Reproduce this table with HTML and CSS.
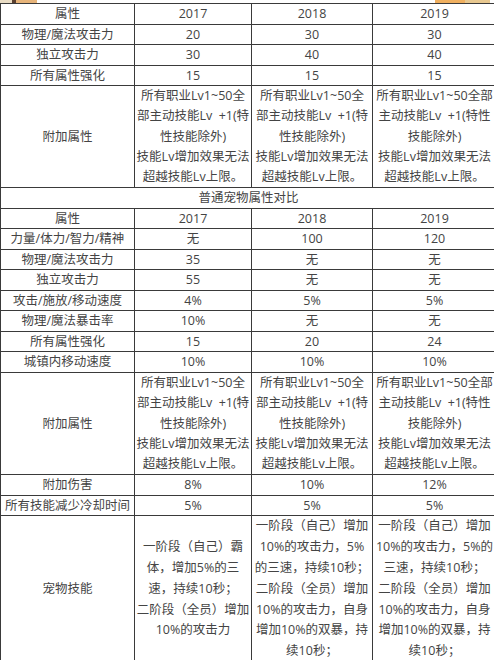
FILE: index.html
```html
<!DOCTYPE html>
<html lang="zh-CN">
<head>
<meta charset="utf-8">
<title>宠物属性对比</title>
<link rel="stylesheet" href="styles.css">
</head>
<body>
<div class="page">
  <div class="strip">
    <span class="pic pic-left"><i class="s1"></i><i class="s2"></i><i class="s3"></i></span>
    <span class="pic pic-right"><i class="s4"></i><i class="s5"></i></span>
  </div>
  <table class="cmp">
    <colgroup>
      <col class="c1"><col class="c2"><col class="c3"><col class="c4">
    </colgroup>
    <tbody>
      <tr><td>属性</td><td>2017</td><td>2018</td><td>2019</td></tr>
      <tr><td>物理/魔法攻击力</td><td>20</td><td>30</td><td>30</td></tr>
      <tr><td>独立攻击力</td><td>30</td><td>40</td><td>40</td></tr>
      <tr><td>所有属性强化</td><td>15</td><td>15</td><td>15</td></tr>
      <tr class="multi">
        <td>附加属性</td>
        <td><span>所有职业Lv1~50全</span><span>部主动技能Lv&nbsp; +1(特</span><span>性技能除外)</span><span>技能Lv增加效果无法</span><span>超越技能Lv上限。</span></td>
        <td><span>所有职业Lv1~50全</span><span>部主动技能Lv&nbsp; +1(特</span><span>性技能除外)</span><span>技能Lv增加效果无法</span><span>超越技能Lv上限。</span></td>
        <td><span>所有职业Lv1~50全部</span><span>主动技能Lv&nbsp; +1(特性</span><span>技能除外)</span><span>技能Lv增加效果无法</span><span>超越技能Lv上限。</span></td>
      </tr>
      <tr><td colspan="4" class="section">普通宠物属性对比</td></tr>
      <tr><td>属性</td><td>2017</td><td>2018</td><td>2019</td></tr>
      <tr><td>力量/体力/智力/精神</td><td>无</td><td>100</td><td>120</td></tr>
      <tr><td>物理/魔法攻击力</td><td>35</td><td>无</td><td>无</td></tr>
      <tr><td>独立攻击力</td><td>55</td><td>无</td><td>无</td></tr>
      <tr><td>攻击/施放/移动速度</td><td>4%</td><td>5%</td><td>5%</td></tr>
      <tr><td>物理/魔法暴击率</td><td>10%</td><td>无</td><td>无</td></tr>
      <tr><td>所有属性强化</td><td>15</td><td>20</td><td>24</td></tr>
      <tr><td>城镇内移动速度</td><td>10%</td><td>10%</td><td>10%</td></tr>
      <tr class="multi">
        <td>附加属性</td>
        <td><span>所有职业Lv1~50全</span><span>部主动技能Lv&nbsp; +1(特</span><span>性技能除外)</span><span>技能Lv增加效果无法</span><span>超越技能Lv上限。</span></td>
        <td><span>所有职业Lv1~50全</span><span>部主动技能Lv&nbsp; +1(特</span><span>性技能除外)</span><span>技能Lv增加效果无法</span><span>超越技能Lv上限。</span></td>
        <td><span>所有职业Lv1~50全部</span><span>主动技能Lv&nbsp; +1(特性</span><span>技能除外)</span><span>技能Lv增加效果无法</span><span>超越技能Lv上限。</span></td>
      </tr>
      <tr><td>附加伤害</td><td>8%</td><td>10%</td><td>12%</td></tr>
      <tr><td>所有技能减少冷却时间</td><td>5%</td><td>5%</td><td>5%</td></tr>
      <tr class="multi pet">
        <td>宠物技能</td>
        <td><span>一阶段（自己）霸</span><span>体，增加5%的三</span><span>速，持续10秒；</span><span>二阶段（全员）增加</span><span>10%的攻击力</span></td>
        <td><span>一阶段（自己）增加</span><span>10%的攻击力，5%</span><span>的三速，持续10秒；</span><span>二阶段（全员）增加</span><span>10%的攻击力，自身</span><span>增加10%的双暴，持</span><span>续10秒；</span></td>
        <td><span>一阶段（自己）增加</span><span>10%的攻击力，5%的</span><span>三速，持续10秒；</span><span>二阶段（全员）增加</span><span>10%的攻击力，自身</span><span>增加10%的双暴，持</span><span>续10秒；</span></td>
      </tr>
    </tbody>
  </table>
</div>
</body>
</html>
```

FILE: styles.css
```css
html, body {
  margin: 0;
  padding: 0;
  background: #ffffff;
  overflow: hidden;
}

.page {
  width: 494px;
  height: 660px;
  overflow: hidden;
  background: #ffffff;
}

.strip {
  display: flex;
  justify-content: space-between;
  height: 3px;
}

.pic {
  display: flex;
  height: 3px;
}

.pic i {
  display: block;
  height: 3px;
}

.pic-left { width: 37px; }
.pic-left .s1 { width: 12px; background: #e9dcc4; }
.pic-left .s2 { width: 4px; background: #5a4030; }
.pic-left .s3 { width: 21px; background: #e7b47a; }

.pic-right { width: 55px; margin-right: 4px; }
.pic-right .s4 { width: 30px; background: #f0b060; }
.pic-right .s5 { width: 25px; background: #e8c890; }

.cmp {
  width: 496px;
  table-layout: fixed;
  border-collapse: collapse;
  font-family: "Open Sans", "Noto Sans CJK SC", sans-serif;
  font-size: 12.5px;
  color: #444444;
}

.c1 { width: 134px; }
.c2 { width: 117px; }
.c3 { width: 121px; }
.c4 { width: 124px; }

.cmp td {
  border: 1px solid #3a3a3a;
  padding: 0;
  height: 19.5px;
  line-height: 19.5px;
  text-align: center;
  vertical-align: middle;
  white-space: nowrap;
  overflow: hidden;
}

.cmp td span {
  display: block;
}

.cmp .multi td {
  line-height: 20.3px;
}

.cmp .pet td {
  line-height: 20.8px;
}

.cmp td.section {
  text-align: center;
}
```
